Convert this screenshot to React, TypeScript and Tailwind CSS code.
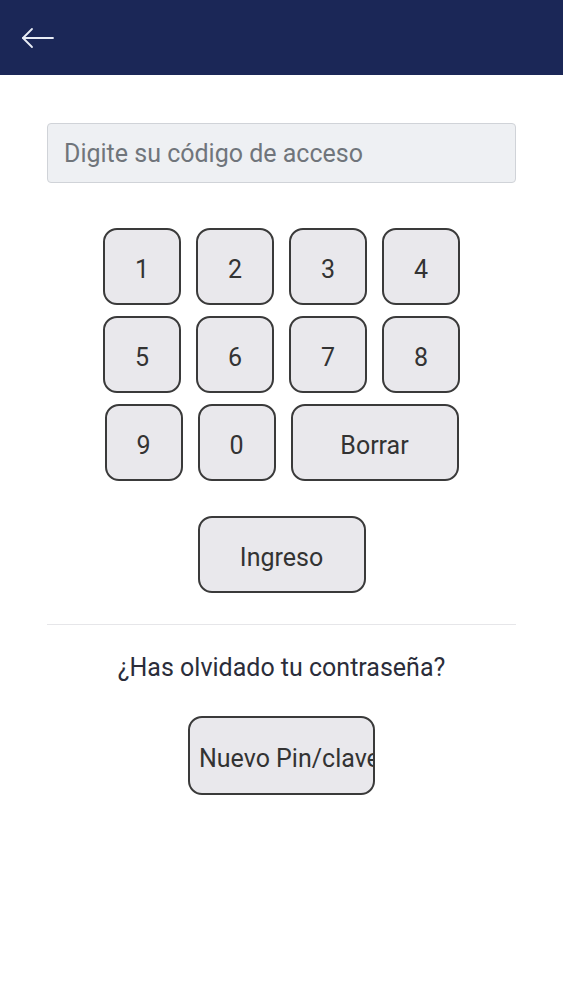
export default function App() {
  const rows = [
    ['1', '2', '3', '4'],
    ['5', '6', '7', '8'],
  ];
  const key =
    'flex items-center justify-center h-[77px] pt-[6px] rounded-[14px] border-2 border-[#3a3a3a] bg-[#e9e8ec] text-[25px] text-[#333]';

  return (
    <div className="min-h-screen bg-white font-['Roboto',sans-serif]">
      <header className="h-[75px] bg-[#1b2757] flex items-center px-[20px]">
        <svg width="36" height="24" viewBox="0 0 36 24" fill="none" stroke="#e8ecf5" strokeWidth="1.8" strokeLinecap="round" strokeLinejoin="round">
          <path d="M3 12 H33" />
          <path d="M12 3 L3 12 L12 21" />
        </svg>
      </header>

      <div className="px-[47px] pt-[48px]">
        <input
          placeholder="Digite su código de acceso"
          className="w-full h-[60px] rounded-[4px] border border-[#d0d3d8] bg-[#eef0f3] px-[16px] text-[25px] text-[#333] placeholder:text-[#70757b] outline-none"
        />

        <div className="mt-[45px] flex flex-col items-center gap-[11px]">
          {rows.map((r, i) => (
            <div key={i} className="flex gap-[15px]">
              {r.map((d) => (
                <button key={d} className={key + ' w-[78px]'}>
                  {d}
                </button>
              ))}
            </div>
          ))}
          <div className="flex gap-[15px]">
            <button className={key + ' w-[78px]'}>9</button>
            <button className={key + ' w-[78px]'}>0</button>
            <button className={key + ' w-[168px]'}>Borrar</button>
          </div>
        </div>

        <div className="mt-[35px] flex justify-center">
          <button className={key + ' w-[168px]'}>Ingreso</button>
        </div>

        <div className="mt-[31px] border-t border-[#e6e6e9]" />

        <p className="mt-[27px] text-center text-[25px] leading-[32px] text-[#2b2d3a]">
          ¿Has olvidado tu contraseña?
        </p>

        <div className="mt-[32px] flex justify-center">
          <button className="flex items-center justify-start overflow-hidden whitespace-nowrap w-[187px] h-[79px] pt-[6px] px-[9px] rounded-[14px] border-2 border-[#3a3a3a] bg-[#e9e8ec] text-[25px] text-[#333]">
            Nuevo Pin/clave
          </button>
        </div>
      </div>
    </div>
  );
}
